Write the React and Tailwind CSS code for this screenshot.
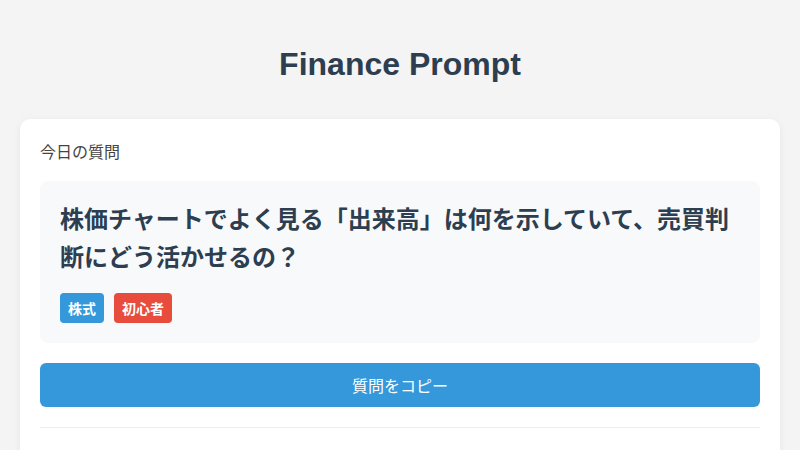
const jp = { fontFamily: '"Noto Sans CJK JP", "Noto Sans", sans-serif' };

function Tag({ label, color }) {
  return (
    <span className={`flex h-[30px] items-center rounded-[4px] px-2 text-[14px] font-bold text-white ${color}`}>
      {label}
    </span>
  );
}

export default function App() {
  return (
    <div className="min-h-screen bg-[#f4f4f4] px-5" style={jp}>
      <h1
        className="pt-[45px] pb-[36px] text-center text-[32px] font-bold leading-[38px] text-[#2c3e50]"
        style={{ fontFamily: '"Liberation Sans", Arial, sans-serif' }}
      >
        Finance Prompt
      </h1>

      <div className="rounded-[10px] bg-white p-5 shadow-[0_2px_8px_rgba(0,0,0,0.06)]">
        <div className="mb-[18px] text-[16px] leading-6 text-[#444]">今日の質問</div>

        <div className="rounded-[8px] bg-[#f8f9fa] px-5 pt-[18px] pb-5">
          <p className="mb-[18px] text-[24px] font-bold leading-[38px] text-[#2c3e50]">
            株価チャートでよく見る「出来高」は何を示していて、売買判断にどう活かせるの？
          </p>
          <div className="flex gap-[10px]">
            <Tag label="株式" color="bg-[#3498db]" />
            <Tag label="初心者" color="bg-[#e74c3c]" />
          </div>
        </div>

        <button className="mt-5 flex h-[44px] w-full items-center justify-center rounded-[6px] bg-[#3498db] text-[16px] text-white">
          質問をコピー
        </button>

        <div className="mt-5 border-t border-[#eeeeee]" />
        <div className="h-10" />
      </div>
    </div>
  );
}
